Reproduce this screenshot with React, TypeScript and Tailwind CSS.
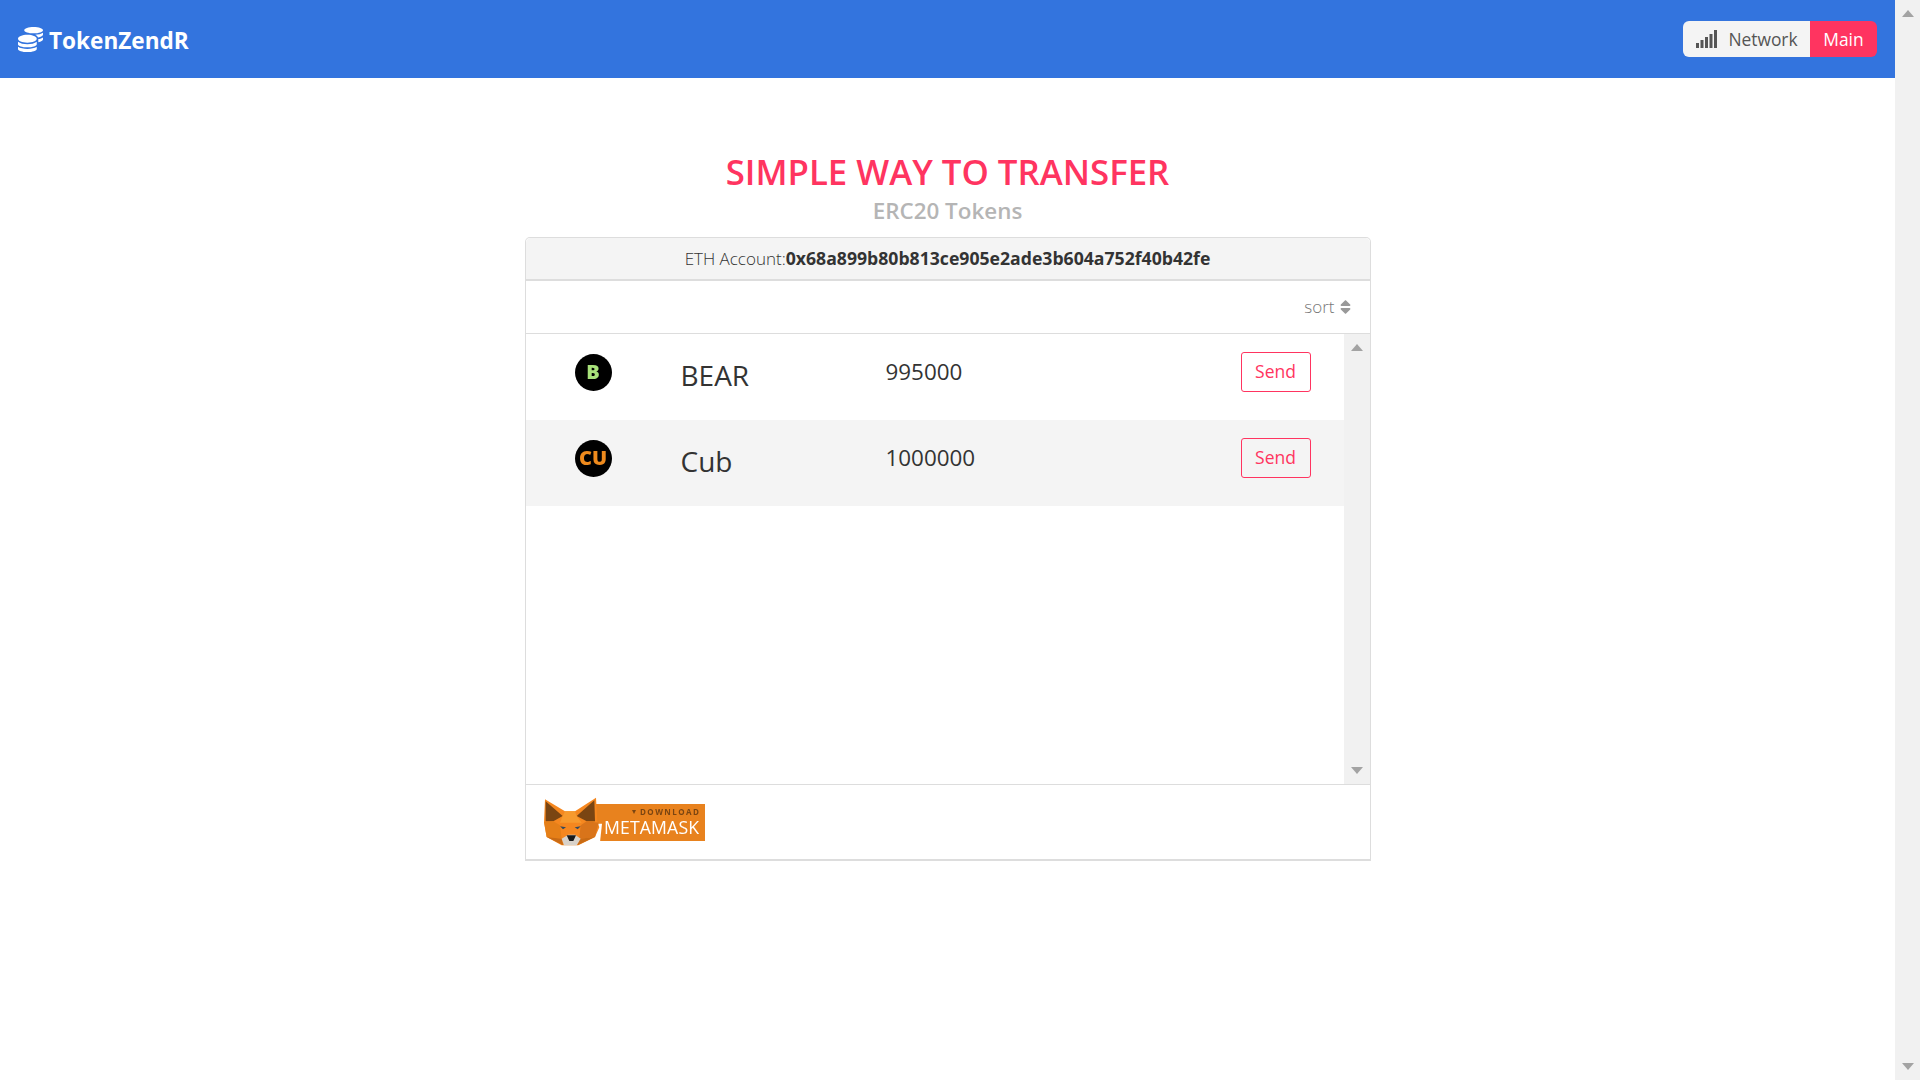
import { FaCoins, FaSort } from "react-icons/fa";

const font = { fontFamily: '"Open Sans", "Noto Sans", sans-serif' };

function Signal() {
  return (
    <svg width="22" height="18" viewBox="0 0 22 18" className="fill-[#555]">
      <rect x="0" y="13" width="3" height="5" />
      <rect x="4.5" y="10" width="3" height="8" />
      <rect x="9" y="7" width="3" height="11" />
      <rect x="13.5" y="4" width="3" height="14" />
      <rect x="18" y="0" width="3" height="18" />
    </svg>
  );
}

function TokenIcon({ label, color }: { label: string; color: string }) {
  return (
    <div className={`flex h-[37px] w-[37px] items-center justify-center rounded-full bg-black text-[20px] font-extrabold blur-[0.4px] ${color}`}>
      {label}
    </div>
  );
}

function Row({ icon, name, amount, striped }: { icon: React.ReactNode; name: string; amount: string; striped?: boolean }) {
  return (
    <div className={`flex h-[86px] items-center ${striped ? "bg-[#f4f4f4]" : "bg-white"}`}>
      <div className="mb-[10px] ml-[49px] w-[106px] shrink-0">{icon}</div>
      <div className="mb-[4px] w-[205px] shrink-0 text-[28px] text-[#333]">{name}</div>
      <div className="mb-[11px] flex-1 text-[22.4px] text-[#333]">{amount}</div>
      <button className="mr-[33px] mb-[10px] h-[40px] w-[70px] rounded-[3px] border border-[#ff3460] pb-[1px] text-[17.5px] text-[#ff3460]">
        Send
      </button>
    </div>
  );
}

function MetaMask() {
  return (
    <svg width="161" height="49" viewBox="12 15 483 147" className="mb-[2px] blur-[0.4px]">
      <rect x="165" y="36" width="330" height="111" fill="#e8821e" />
      <polygon points="172,95 186,95 180,150 150,150" fill="#fff" />
      <polygon points="15,22 75,58 105,58 168,17 172,88 178,106 165,135 115,160 65,160 20,135 12,90" fill="#f5871f" />
      <polygon points="17,28 68,72 40,88 17,88" fill="#7a4512" />
      <polygon points="163,25 110,72 140,88 165,88" fill="#7a4512" />
      <polygon points="75,58 105,58 110,72 125,92 60,92 68,72" fill="#f79a2e" />
      <polygon points="12,90 40,88 60,100 65,140 20,135" fill="#e57f18" />
      <polygon points="176,92 140,88 122,100 118,140 165,135" fill="#d9741a" />
      <polygon points="20,135 65,140 70,160" fill="#c96b15" />
      <polygon points="165,135 118,140 112,160" fill="#c96b15" />
      <polygon points="65,140 85,128 105,128 122,140 110,160 72,160" fill="#d8d2ca" />
      <polygon points="60,103 78,106 69,112" fill="#34495e" />
      <polygon points="122,103 104,106 113,112" fill="#34495e" />
      <polygon points="80,130 108,130 100,147 88,147" fill="#1a1a1a" />
      <polygon points="276,54 288,54 282,66" fill="#7a4512" />
      <text x="300" y="69" textLength="177" lengthAdjust="spacing" fontSize="24" fontWeight="700" fill="#7a4512" fontFamily="Open Sans, sans-serif">
        DOWNLOAD
      </text>
      <text x="192" y="127" textLength="285" lengthAdjust="spacing" fontSize="53" fill="#fff" fontFamily="Open Sans, sans-serif">
        METAMASK
      </text>
    </svg>
  );
}

function ScrollTrack({ className }: { className: string }) {
  return (
    <div className={`flex flex-col items-center justify-between bg-[#f1f1f1] ${className}`}>
      <svg width="12" height="7" viewBox="0 0 12 7" className="mt-[10px] fill-[#a3a3a3]">
        <polygon points="6,0 12,7 0,7" />
      </svg>
      <svg width="12" height="7" viewBox="0 0 12 7" className="mb-[10px] fill-[#a3a3a3]">
        <polygon points="0,0 12,0 6,7" />
      </svg>
    </div>
  );
}

export default function App() {
  return (
    <div className="flex h-[1080px] w-[1920px] overflow-hidden bg-white" style={font}>
      <div className="flex w-[1895px] flex-col">
        <nav className="flex h-[78px] items-center justify-between bg-[#3374de] pr-[18px] pl-[18px]">
          <div className="flex items-center gap-[6px] text-white">
            <FaCoins className="mt-[1px] text-[25px]" />
            <span className="mt-[4px] text-[22.6px] font-bold">TokenZendR</span>
          </div>
          <div className="flex h-[36px] overflow-hidden rounded-[6px] text-[17.4px]">
            <div className="flex w-[127px] items-center justify-center gap-[10px] bg-[#f4f4f4] pl-[1px] text-[#555]">
              <Signal />
              <span>Network</span>
            </div>
            <div className="flex w-[67px] items-center justify-center bg-[#ff3460] text-white">Main</div>
          </div>
        </nav>

        <main className="flex flex-col items-center pt-[71px]">
          <h1 className="text-[34.8px] leading-[45px] font-semibold text-[#ff3460]">SIMPLE WAY TO TRANSFER</h1>
          <h2 className="mt-[2px] mb-[11px] text-[22.4px] leading-[30px] font-semibold text-[#b5b5b5]">ERC20 Tokens</h2>

          <div className="w-[846px] rounded-t-[5px] border border-b-2 border-[#ddd]">
            <div className="flex h-[43px] items-center justify-center rounded-t-[5px] border-b-2 border-[#ddd] bg-[#f4f4f4] text-[#333]">
              <span className="text-[17px] font-light">ETH Account:</span>
              <strong className="text-[17.65px] font-bold">0x68a899b80b813ce905e2ade3b604a752f40b42fe</strong>
            </div>
            <div className="flex h-[53px] items-center justify-end gap-[5px] border-b border-[#ddd] pr-[19px] text-[17px] font-light text-[#777]">
              <span>sort</span>
              <FaSort className="h-[18px] w-[11px] text-[#999]" />
            </div>
            <div className="flex h-[450px]">
              <div className="flex-1">
                <Row icon={<TokenIcon label="B" color="text-[#a8e27a]" />} name="BEAR" amount="995000" />
                <Row icon={<TokenIcon label="CU" color="text-[#ee8a1d]" />} name="Cub" amount="1000000" striped />
              </div>
              <ScrollTrack className="w-[26px]" />
            </div>
            <div className="flex h-[75px] items-center border-t border-[#ddd] pl-[18px]">
              <MetaMask />
            </div>
          </div>
        </main>
      </div>
      <ScrollTrack className="w-[25px]" />
    </div>
  );
}
